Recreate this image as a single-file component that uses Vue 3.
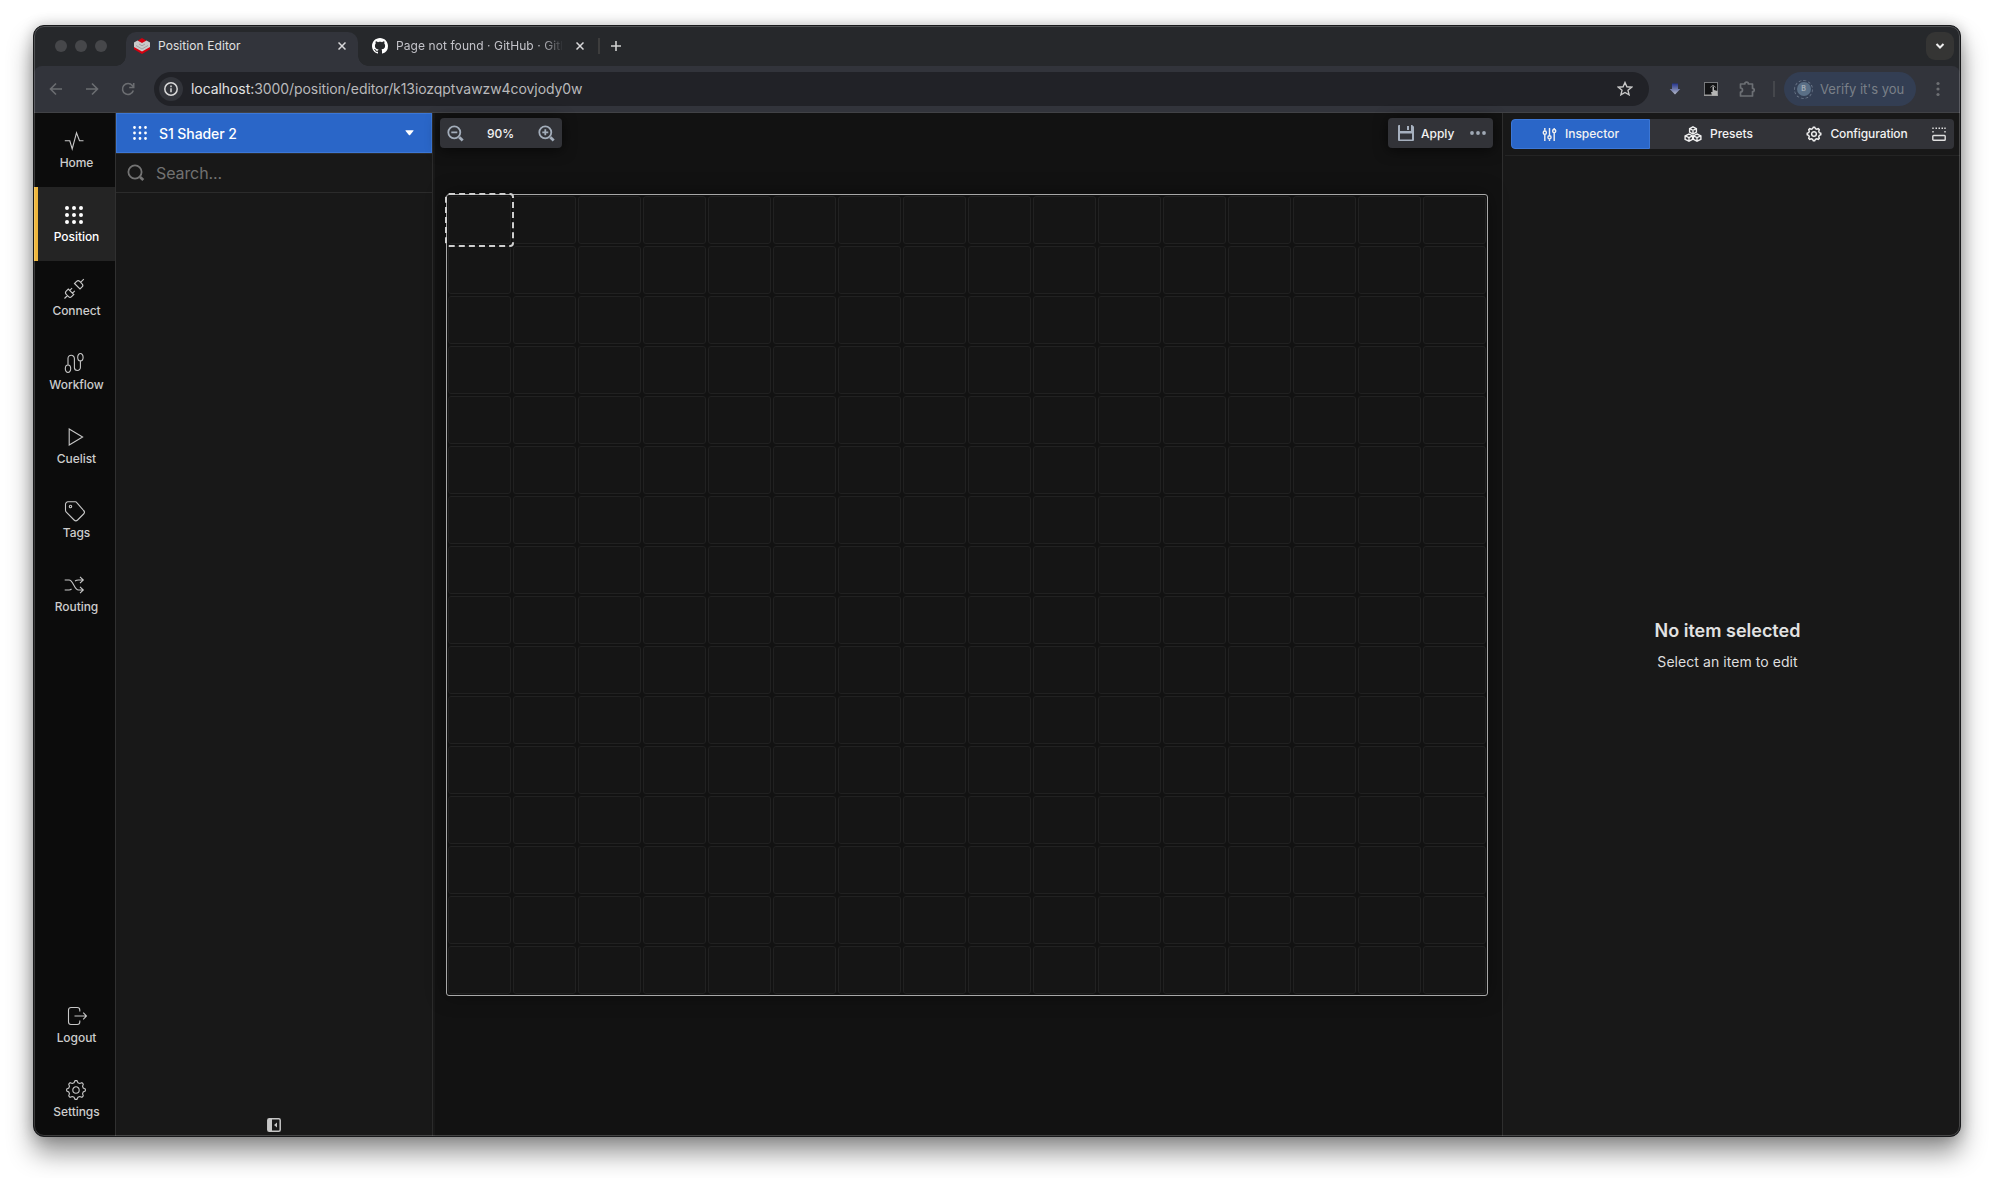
<template>
  <div class="window">
    <div class="tab-strip">
      <div class="lights"><i></i><i></i><i></i></div>
      <div class="tab active">
        <svg class="favicon" viewBox="0 0 16 16">
          <path d="M8 0l4 2.400v4L8 8 4 6.400V2.400z" fill="#d2000f" />
          <path d="M0 8l8 4.500L16 8v3.200L8 16l-8-4.800z" fill="#d2000f" />
          <path d="M0 4.500l3.500-2L8 5l4.500-2.500 3.500 2V9l-8 4.600L0 9z" fill="#c9c9c9" />
          <path d="M2 7.500l6 3.500 6-3.500M5 6l3 1.800L11 6" fill="none" stroke="#a2a2a2" />
        </svg>
        <span class="tab-title">Position Editor</span>
        <svg class="close" viewBox="0 0 8 8"><path d="M.5.5l7 7M7.500.5l-7 7" /></svg>
      </div>
      <div class="tab">
        <svg class="favicon" viewBox="0 0 16 16">
          <path fill="#fff" d="M8 0C3.580 0 0 3.580 0 8c0 3.540 2.290 6.530 5.470 7.590.4.070.55-.17.55-.38 0-.19-.01-.82-.01-1.490-2.010.37-2.530-.49-2.690-.94-.09-.23-.48-.94-.82-1.130-.28-.15-.68-.52-.01-.53.63-.01 1.080.58 1.230.82.72 1.210 1.870.87 2.330.66.070-.52.28-.87.51-1.070-1.780-.2-3.640-.89-3.640-3.950 0-.87.31-1.590.82-2.150-.08-.2-.36-1.020.08-2.120 0 0 .67-.21 2.200.82.64-.18 1.320-.27 2-.27s1.360.09 2 .27c1.530-1.040 2.200-.82 2.200-.82.44 1.100.16 1.920.08 2.120.51.56.82 1.270.82 2.150 0 3.070-1.870 3.750-3.650 3.950.29.25.54.73.54 1.480 0 1.070-.01 1.930-.01 2.200 0 .21.15.46.55.38A8.010 8.010 0 0 0 16 8c0-4.420-3.580-8-8-8z" />
        </svg>
        <span class="tab-title faded">Page not found · GitHub · GitHub</span>
        <svg class="close" viewBox="0 0 8 8"><path d="M.5.5l7 7M7.500.5l-7 7" /></svg>
      </div>
      <span class="tab-divider"></span>
      <svg class="plus" viewBox="0 0 12 12"><path d="M6 1v10M1 6h10" /></svg>
      <div class="tab-search">
        <svg width="10" height="6" viewBox="0 0 10 6"><path d="M1.500 1L5 4.500 8.500 1" /></svg>
      </div>
    </div>

    <div class="toolbar">
      <div class="nav">
        <svg viewBox="0 0 16 16"><path d="M14 8H3M8 2.500L2.500 8 8 13.500" /></svg>
        <svg viewBox="0 0 16 16"><path d="M2 8h11M8 2.500L13.500 8 8 13.500" /></svg>
        <svg viewBox="0 0 16 16"><path d="M13.300 9.500A5.500 5.500 0 1 1 12.300 4.500L13.600 6M13.700 2v4.500H9.200" /></svg>
      </div>
      <div class="omnibox">
        <span class="info">
          <svg viewBox="0 0 14 14"><circle cx="7" cy="7" r="6.200" /><path d="M7 6.300v4M7 3.600v1.600" /></svg>
        </span>
        <span class="url"><b>localhost:</b>3000/position/editor/k13iozqptvawzw4covjody0w</span>
        <svg class="star" viewBox="0 0 16 16"><path d="M8 1.500l1.900 4.300 4.700.4-3.600 3.100 1.100 4.600L8 11.500l-4.100 2.400L5 9.300 1.400 6.200l4.700-.4z" /></svg>
      </div>
      <div class="extensions">
        <svg viewBox="0 0 16 16">
          <defs>
            <linearGradient id="arrow" x2="0" y2="1"><stop offset="0" stop-color="#26358c" /><stop offset="1" stop-color="#b5bac8" /></linearGradient>
          </defs>
          <path d="M5 2.500h6V8h2.300L8 13.500 2.700 8H5z" fill="url(#arrow)" />
        </svg>
        <svg viewBox="0 0 16 16">
          <rect x="1.500" y="1.500" width="13" height="13" fill="#121315" stroke="#77797d" />
          <path d="M1 14.300h14" stroke="#999" stroke-width="1.500" />
          <path d="M7.500 6.500q2.500-4 5 0" fill="none" stroke="#8a8a8a" />
          <path d="M9.500 5.500h1.500V9l3.500 1v4.500H9L8 11h1.500z" fill="#b5b5b5" />
        </svg>
        <svg viewBox="0 0 16 16"><path d="M1.500 3h4.300a1.800 1.800 0 0 1 3.600 0h4.100v4.300a1.700 1.700 0 0 1 0 3.400V15h-12v-4a2 2 0 0 0 0-4z" fill="none" stroke="#6c6f74" stroke-width="1.700" stroke-linejoin="round" /></svg>
      </div>
      <span class="toolbar-divider"></span>
      <div class="profile">
        <span class="avatar"><b>B</b></span>
        <span>Verify it's you</span>
      </div>
      <svg class="menu" viewBox="0 0 4 16"><circle cx="2" cy="2.500" r="1.600" /><circle cx="2" cy="8" r="1.600" /><circle cx="2" cy="13.500" r="1.600" /></svg>
    </div>

    <div class="app">
      <nav class="sidebar">
        <a
          v-for="item in navItems"
          :key="item.label"
          class="nav-item"
          :class="{ selected: item.selected, bottom: item.bottom }"
        >
          <svg viewBox="0 0 22 22" :class="{ dots: item.selected }"><path :d="item.icon" /></svg>
          <span>{{ item.label }}</span>
        </a>
      </nav>

      <aside class="left-panel">
        <div class="panel-select">
          <svg class="grid-icon" viewBox="0 0 14 14"><path :d="smallDots" /></svg>
          <span>S1 Shader 2</span>
          <svg class="caret" viewBox="0 0 10 6"><path d="M1 0h8q1 0 .3.900L5.700 5.200q-.7.700-1.400 0L.7.900Q0 0 1 0z" /></svg>
        </div>
        <div class="search">
          <svg viewBox="0 0 18 18"><circle cx="8" cy="8" r="6.600" /><path d="M13 13l3.300 3" stroke-width="2.800" /></svg>
          <span>Search...</span>
        </div>
        <div class="panel-body">
          <svg class="collapse" viewBox="0 0 14 14">
            <rect x=".8" y=".8" width="12.400" height="12.400" rx="1.500" fill="none" stroke="#c6c6c6" stroke-width="1.500" />
            <path d="M1 1h4v12H1zM10 4.500v5L7 7z" fill="#c6c6c6" />
          </svg>
        </div>
      </aside>

      <main class="canvas">
        <div class="canvas-tools">
          <div class="tool-group zoom">
            <svg viewBox="0 0 17 17"><circle cx="7.300" cy="7.300" r="6" /><path d="M4.300 7.300h6" /><path d="M12.300 12.300l3.400 3.200" stroke-width="2.800" /></svg>
            <span>90%</span>
            <svg viewBox="0 0 17 17"><circle cx="7.300" cy="7.300" r="6" /><path d="M4.300 7.300h6M7.300 4.300v6" /><path d="M12.300 12.300l3.400 3.200" stroke-width="2.800" /></svg>
          </div>
          <div class="tool-group apply">
            <svg class="save" viewBox="0 0 16 16">
              <path fill-rule="evenodd" d="M0 1q0-1 1-1h1v6h11V0h1.200L16 1.800V15q0 1-1 1H1q-1 0-1-1zM2 8.500V14.500h12V8.500zM9 1h2v4H9z" />
            </svg>
            <span>Apply</span>
            <svg class="more" viewBox="0 0 16 4"><circle cx="2" cy="2" r="1.900" /><circle cx="8" cy="2" r="1.900" /><circle cx="14" cy="2" r="1.900" /></svg>
          </div>
        </div>
        <div class="board">
          <div v-for="n in columns * rows" :key="n" class="cell"></div>
          <div class="cursor"></div>
        </div>
      </main>

      <aside class="right-panel">
        <div class="tabs">
          <div class="panel-tab current">
            <svg viewBox="0 0 16 16"><path d="M3 1v3M3 8v7M8 1v8M8 13v2M13 1v1.500M13 6.500V15" /><circle cx="3" cy="6" r="1.700" /><circle cx="8" cy="11" r="1.700" /><circle cx="13" cy="4.300" r="1.700" /></svg>
            <span>Inspector</span>
          </div>
          <div class="panel-tab">
            <svg class="cubes" viewBox="0 0 18 16">
              <path d="M9 .8l3.400 1.800v3.600L9 8 5.600 6.200V2.600zM5 8l3.600 1.900v3.500L5 15.200l-3.900-1.800V9.900zM13 8l3.900 1.900v3.500L13 15.200l-3.600-1.800V9.900zM5.600 2.600L9 4.300l3.400-1.700M9 4.300V8M1.100 9.900L5 11.600l3.600-1.700M5 11.600v3.600M9.400 9.900l3.600 1.700 3.900-1.700M13 11.600v3.600" />
            </svg>
            <span>Presets</span>
          </div>
          <div class="panel-tab wide">
            <svg viewBox="0 0 22 22" class="cog"><path :d="gear" /></svg>
            <span>Configuration</span>
          </div>
          <div class="dock">
            <svg viewBox="0 0 14 14"><path d="M1 .5v5.500M13 .5v5.500" stroke-dasharray="1.500 2" /><path d="M3.500 1.200h8" stroke-dasharray="1.500 1.500" /><rect x=".8" y="8.500" width="12.400" height="4.700" rx=".8" /></svg>
          </div>
        </div>
        <div class="empty">
          <h3>No item selected</h3>
          <p>Select an item to edit</p>
        </div>
      </aside>
    </div>
  </div>
</template>

<script setup>
const columns = 16
const rows = 16

// 3x3 grid of round dots
function dotGrid(start, step, r) {
  let d = ''
  for (let y = 0; y < 3; y++) {
    for (let x = 0; x < 3; x++) {
      d += `M${start + x * step - r} ${start + y * step}a${r} ${r} 0 1 0 ${r * 2} 0a${r} ${r} 0 1 0 ${-r * 2} 0z`
    }
  }
  return d
}

// cog with eight teeth and a round hole
function cogPath(c, outer, inner, hole) {
  const points = []
  for (let i = 0; i < 8; i++) {
    const a = (i * Math.PI) / 4
    const corners = [[-0.27, inner], [-0.1, outer], [0.1, outer], [0.27, inner]]
    corners.forEach(([offset, r]) => {
      points.push(`${(c + r * Math.cos(a + offset)).toFixed(2)} ${(c + r * Math.sin(a + offset)).toFixed(2)}`)
    })
  }
  return `M${points.join('L')}ZM${c - hole} ${c}a${hole} ${hole} 0 1 0 ${hole * 2} 0a${hole} ${hole} 0 1 0 ${-hole * 2} 0z`
}

const smallDots = dotGrid(1.5, 5.5, 1.4)
const gear = cogPath(11, 9.4, 7.5, 3.2)

const navItems = [
  { label: 'Home', icon: 'M1.800 10.800h5l2.400 8.200L13.500 2.800l3 8h4' },
  { label: 'Position', icon: dotGrid(4, 7, 2), selected: true },
  {
    label: 'Connect',
    icon: 'M17.800 4.200l3-3M1.500 20.500l3-3M5.500 18.600a2.200 2.200 0 0 0 3.100 0l2.200-2.100-5.500-5.500-2.100 2.200a2.200 2.200 0 0 0 0 3.100zM6.800 12.400l2.300-2.300M9.500 15.200l2.300-2.300M11.500 5.500l5.500 5.500 2.100-2.100a2.200 2.200 0 0 0 0-3.100l-2.400-2.400a2.200 2.200 0 0 0-3.100 0z'
  },
  {
    label: 'Workflow',
    icon: 'M5 13V6.500a3.200 3.200 0 0 1 6.400 0v9a3 3 0 0 0 6 0V9M2.300 16.700a2.700 3.700 0 1 0 5.400 0a2.700 3.700 0 1 0-5.400 0zM14.700 5.200a2.700 3.700 0 1 0 5.400 0a2.700 3.700 0 1 0-5.400 0z'
  },
  { label: 'Cuelist', icon: 'M6.200 3v16L19.600 11z' },
  {
    label: 'Tags',
    icon: 'M12.500 1.800H5a2.500 2.500 0 0 0-2.500 2.500V10q0 1.300.8 2.100l7.800 7.900a2.500 2.500 0 0 0 3.500 0l6-6a2.500 2.500 0 0 0 0-3.500l-6.800-7.900q-.6-.8-1.300-.8zM6.300 6.500a1.200 1.200 0 1 0 2.400 0a1.200 1.200 0 1 0-2.400 0z'
  },
  {
    label: 'Routing',
    icon: 'M1.700 6H6c4.500 0 5 10 9.500 10h4.700M1.700 16H6q1.500 0 2.500-1M12 7q1.500-1 3.500-1h4.700M17 2.800L20.300 6 17 9.200M17 12.800l3.300 3.200-3.300 3.200'
  },
  {
    label: 'Logout',
    icon: 'M14.800 6.500V5a2.500 2.500 0 0 0-2.500-2.500H6A2.500 2.500 0 0 0 3.500 5v12A2.500 2.500 0 0 0 6 19.500h6.300a2.500 2.500 0 0 0 2.500-2.500v-1.500M9.500 11h12M18.200 7.700l3.300 3.300-3.300 3.300',
    bottom: true
  },
  { label: 'Settings', icon: gear, bottom: true }
]
</script>

<style>
body {
  margin: 0;
  background: #fff;
}
</style>

<style scoped>
.window {
  position: relative;
  box-sizing: border-box;
  width: 1928px;
  height: 1112px;
  margin: 25px 33px 0;
  display: flex;
  flex-direction: column;
  overflow: hidden;
  border: 1px solid #18191b;
  border-radius: 11px;
  background: #26282b;
  box-shadow: 0 16px 26px rgba(0, 0, 0, 0.42), 0 0 14px rgba(0, 0, 0, 0.22);
  font-family: Inter, "Liberation Sans", sans-serif;
  color: #e0e0e0;
}
/* keeps the page tall enough for the window shadow */
:global(#app) {
  box-sizing: border-box;
  min-height: 1178px;
  display: flow-root;
}
/* thin highlight along the window edge */
.window::after {
  content: "";
  position: absolute;
  inset: 0;
  border: 1px solid rgba(255, 255, 255, 0.2);
  border-radius: 10px;
  pointer-events: none;
}
svg {
  display: block;
  flex: none;
}

/* browser chrome */
.tab-strip {
  flex: none;
  height: 40px;
  box-sizing: border-box;
  padding: 6px 6px 0 21px;
  display: flex;
}
.lights {
  display: flex;
  gap: 8px;
  width: 71px;
  padding-top: 8px;
}
.lights i {
  width: 12px;
  height: 12px;
  border-radius: 50%;
  background: #46474a;
}
.tab {
  position: relative;
  box-sizing: border-box;
  height: 34px;
  width: 232px;
  padding: 0 6px 6px 14px;
  display: flex;
  align-items: center;
  font-size: 12px;
  color: #c3c3c9;
}
.tab.active {
  background: #32343b;
  border-radius: 10px 10px 0 0;
  padding-left: 8px;
  padding-right: 12px;
  color: #e0e0e0;
}
.tab.active::before,
.tab.active::after {
  content: "";
  position: absolute;
  bottom: 0;
  width: 10px;
  height: 10px;
}
.tab.active::before {
  left: -10px;
  background: radial-gradient(circle at 0 0, transparent 9.5px, #32343b 10px);
}
.tab.active::after {
  right: -10px;
  background: radial-gradient(circle at 100% 0, transparent 9.5px, #32343b 10px);
}
.favicon {
  width: 16px;
  height: 16px;
  margin-right: 8px;
}
.tab-title {
  flex: 1;
  padding-bottom: 2px;
  overflow: hidden;
  white-space: nowrap;
  letter-spacing: 0.08px;
}
.tab-title.faded {
  margin-right: 14px;
  mask-image: linear-gradient(90deg, #000 146px, transparent 168px);
}
.close {
  width: 8px;
  height: 8px;
  fill: none;
  stroke: #d8d8da;
  stroke-width: 1.5;
}
.tab-divider {
  width: 2px;
  height: 16px;
  margin: 6px 0 0 8px;
  background: #3d3d3d;
}
.plus {
  width: 12px;
  height: 12px;
  margin: 8px 0 0 10px;
  fill: none;
  stroke: #d0d0d0;
  stroke-width: 1.6;
}
.tab-search {
  width: 28px;
  height: 28px;
  margin-left: auto;
  border-radius: 9px;
  background: #353534;
  display: flex;
  align-items: center;
  justify-content: center;
}
.tab-search svg {
  fill: none;
  stroke: #eee;
  stroke-width: 2;
}
.toolbar {
  flex: none;
  box-sizing: border-box;
  height: 47px;
  padding: 0 20px 0 14px;
  display: flex;
  align-items: center;
  background: #32343b;
  border-bottom: 1px solid #414246;
  border-radius: 8px 8px 0 0;
}
.nav {
  display: flex;
  gap: 20px;
  width: 106px;
}
.nav svg {
  width: 16px;
  height: 16px;
  fill: none;
  stroke: #6b6d71;
  stroke-width: 1.6;
}
.omnibox {
  box-sizing: border-box;
  width: 1495px;
  height: 34px;
  padding: 0 16px 0 5px;
  display: flex;
  align-items: center;
  border-radius: 17px;
  background: #212227;
}
.info {
  width: 24px;
  height: 24px;
  margin-right: 8px;
  border-radius: 50%;
  background: #32343a;
  display: flex;
  align-items: center;
  justify-content: center;
}
.info svg {
  width: 14px;
  height: 14px;
  fill: none;
  stroke: #d8d8d8;
  stroke-width: 1.5;
}
.url {
  flex: 1;
  padding-bottom: 2px;
  font-size: 14px;
  letter-spacing: -0.07px;
  color: #b9b9bb;
}
.url b {
  font-weight: 400;
  color: #e2e2e2;
}
.star {
  width: 16px;
  height: 16px;
  fill: none;
  stroke: #c8c8c8;
  stroke-width: 1.4;
}
.extensions {
  display: flex;
  gap: 20px;
  margin-left: 18px;
}
.extensions svg {
  width: 16px;
  height: 16px;
}
.toolbar-divider {
  width: 2px;
  height: 16px;
  margin: 0 9px 0 18px;
  background: #45474c;
}
.profile {
  box-sizing: border-box;
  width: 132px;
  height: 34px;
  padding-left: 10px;
  display: flex;
  align-items: center;
  gap: 7px;
  border-radius: 17px;
  background: #333e53;
  color: #7a8088;
  font-size: 13px;
  white-space: nowrap;
}
.avatar {
  flex: none;
  box-sizing: border-box;
  width: 19px;
  height: 19px;
  display: flex;
  align-items: center;
  justify-content: center;
  border: 1px dashed #697587;
  border-radius: 50%;
}
.avatar b {
  width: 14px;
  height: 14px;
  border-radius: 50%;
  background: #5a6f86;
  color: #a3acb5;
  font-size: 7px;
  line-height: 14px;
  text-align: center;
}
.menu {
  width: 4px;
  height: 16px;
  margin-left: 20px;
  fill: #6d6f73;
}

/* application */
.app {
  flex: 1;
  min-height: 0;
  display: flex;
}
.sidebar {
  box-sizing: border-box;
  width: 82px;
  display: flex;
  flex-direction: column;
  background: #0c0c0c;
  border-right: 1px solid #303030;
}
.nav-item {
  box-sizing: border-box;
  height: 74px;
  padding: 17px 0 0 4px;
  display: flex;
  flex-direction: column;
  align-items: center;
  gap: 3px;
  font-size: 12px;
  line-height: 16px;
  letter-spacing: -0.05px;
  font-weight: 500;
  color: #cdcdcd;
}
.nav-item:nth-child(8) {
  margin-top: auto;
}
.nav-item.selected {
  background: #242424;
  border-left: 4px solid #efb73e;
  padding-left: 0;
  color: #fff;
}
.nav-item svg {
  width: 22px;
  height: 22px;
  margin-left: -6px;
  fill: none;
  stroke: #c8c8c8;
  stroke-width: 1.1;
}
.nav-item.bottom svg {
  margin-left: -1px;
}
.nav-item svg.dots {
  fill: #fff;
  stroke: none;
}
.left-panel {
  box-sizing: border-box;
  width: 317px;
  display: flex;
  flex-direction: column;
  background: #181818;
  border-right: 1px solid #2b2b2b;
}
.panel-select {
  box-sizing: border-box;
  height: 40px;
  padding: 0 17px 0 16px;
  display: flex;
  align-items: center;
  background: #2a66c8;
  border: 1px solid #3c77d6;
  color: #fff;
  font-size: 14px;
  font-weight: 500;
  letter-spacing: -0.08px;
}
.grid-icon {
  width: 14px;
  height: 14px;
  margin-right: 12px;
  fill: #fff;
}
.caret {
  width: 9px;
  height: 6px;
  margin-left: auto;
  fill: #fff;
}
.search {
  box-sizing: border-box;
  height: 40px;
  padding-left: 11px;
  display: flex;
  align-items: center;
  gap: 11px;
  border-top: 1px solid #2b2b2b;
  border-bottom: 1px solid #2b2b2b;
  color: #717171;
  font-size: 16px;
  letter-spacing: -0.1px;
}
.search svg {
  width: 18px;
  height: 18px;
  fill: none;
  stroke: #747474;
  stroke-width: 1.8;
}
.panel-body {
  flex: 1;
  display: flex;
  align-items: flex-end;
  justify-content: center;
  padding-bottom: 4px;
}
.collapse {
  width: 14px;
  height: 14px;
}
.canvas {
  box-sizing: border-box;
  flex: 1;
  padding: 5px 9px 0 5px;
  background: #121212;
  border-left: 2px solid #181818;
}
.canvas-tools {
  display: flex;
  justify-content: space-between;
}
.tool-group {
  box-sizing: border-box;
  height: 30px;
  display: flex;
  align-items: center;
  border-radius: 4px;
  background: #323338;
  box-shadow: 0 2px 14px rgba(0, 0, 0, 0.6);
  color: #f2f2f2;
  font-size: 12px;
  font-weight: 500;
}
.zoom {
  width: 122px;
  padding: 0 7px;
  justify-content: space-between;
}
.zoom svg {
  width: 17px;
  height: 17px;
  fill: none;
  stroke: #a3adba;
  stroke-width: 1.8;
}
.zoom span {
  padding-right: 1px;
  letter-spacing: -0.1px;
}
.apply {
  width: 105px;
  padding: 0 7px 0 10px;
}
.save {
  width: 16px;
  height: 16px;
  margin-right: 7px;
  fill: #a6b0be;
}
.more {
  width: 16px;
  height: 4px;
  margin-left: auto;
  fill: #a0a9b5;
}
.board {
  position: relative;
  box-sizing: border-box;
  width: 1042px;
  height: 802px;
  margin: 46px 0 0 6px;
  display: grid;
  grid-template-columns: repeat(16, 65px);
  grid-template-rows: repeat(16, 50px);
  border: 1px solid #a8a8a8;
  border-radius: 3px;
  background: #121212;
  box-shadow: 0 0 20px rgba(0, 0, 0, 0.35);
}
.cell {
  margin: 1px;
  background: #151515;
  border: 1px solid #212121;
  border-radius: 3px;
}
.cursor {
  position: absolute;
  box-sizing: border-box;
  left: -2px;
  top: -2px;
  width: 69px;
  height: 54px;
  border: 2px dashed #cfcfcf;
  border-radius: 4px;
}
.right-panel {
  box-sizing: border-box;
  width: 458px;
  display: flex;
  flex-direction: column;
  background: #181818;
  border-left: 1px solid #2e2e2e;
}
.tabs {
  box-sizing: border-box;
  height: 43px;
  margin-left: 2px;
  padding: 6px;
  display: flex;
  border-bottom: 1px solid #242424;
}
.panel-tab {
  box-sizing: border-box;
  width: 139px;
  height: 30px;
  display: flex;
  align-items: center;
  justify-content: center;
  gap: 8px;
  background: #323338;
  color: #f2f2f2;
  font-size: 12px;
  font-weight: 500;
}
.panel-tab span {
  padding-bottom: 1px;
}
.panel-tab.current {
  border: 1px solid #3c77d6;
  border-radius: 4px 0 0 4px;
  background: #2a66c8;
}
.panel-tab.wide {
  width: 136px;
}
.panel-tab.wide span {
  letter-spacing: -0.1px;
}
.panel-tab svg {
  width: 15px;
  height: 15px;
  fill: none;
  stroke: #f0f0f0;
  stroke-width: 1.5;
}
.panel-tab svg.cubes {
  width: 18px;
  height: 16px;
  margin-left: -2px;
  stroke-width: 1.4;
}
.panel-tab svg.cog {
  width: 16px;
  height: 16px;
  stroke-width: 2;
}
.dock {
  flex: 1;
  height: 30px;
  display: flex;
  align-items: center;
  padding-left: 7px;
  background: #323338;
  border-radius: 0 4px 4px 0;
}
.dock svg {
  width: 14px;
  height: 14px;
  fill: none;
  stroke: #e0e0e0;
  stroke-width: 1.4;
}
.empty {
  flex: 1;
  padding: 464px 8px 0 0;
  text-align: center;
}
.empty h3 {
  margin: 0;
  font-size: 18px;
  line-height: 22px;
  font-weight: 600;
  color: #e2e2e2;
}
.empty p {
  margin: 10px 0 0;
  font-size: 14px;
  line-height: 20px;
  letter-spacing: 0.06px;
  color: #dedede;
}
</style>
